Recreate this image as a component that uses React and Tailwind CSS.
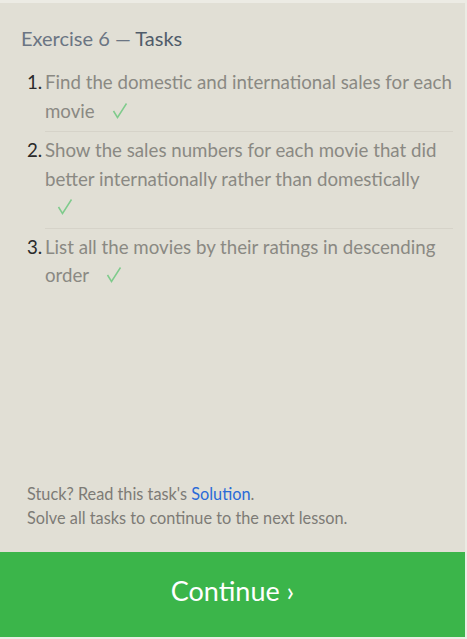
import React from "react";

const tasks = [
  "Find the domestic and international sales for each movie",
  "Show the sales numbers for each movie that did better internationally rather than domestically",
  "List all the movies by their ratings in descending order",
];

function Check() {
  return (
    <svg
      width="20"
      height="17"
      viewBox="0 0 20 17"
      className="inline-block ml-[12px] align-[-1px]"
    >
      <polyline
        points="1.5,9 5.5,15.5 14.5,1.5"
        fill="none"
        stroke="#7fcb8c"
        strokeWidth="1.5"
      />
    </svg>
  );
}

function App() {
  return (
    <div className="w-[467px] h-[639px] bg-[#ecebe4] pt-[3px] pr-[2px] pb-[2px] font-['Lato',sans-serif]">
      <div className="h-full flex flex-col bg-[#e1dfd5]">
        {/* HEADER */}
        <h1 className="px-[21px] pt-[23px] text-[20px] leading-[24px] text-[#6b7583]">
          Exercise 6 — <span className="text-[#505c6a]">Tasks</span>
        </h1>

        {/* TASKS */}
        <ol className="mt-[18px] pl-[27px] pr-[12px]">
          {tasks.map((task, i) => (
            <li key={i} className="flex">
              <span className="w-[18px] shrink-0 text-[18.7px] leading-[28.5px] text-[#2a2a2a]">
                {i + 1}.
              </span>
              <div
                className={
                  "flex-1 pb-[6px] mb-[4px] text-[18.7px] leading-[28.5px] text-[#8a8983] " +
                  (i < tasks.length - 1 ? "border-b border-[#d6d3c9]" : "")
                }
              >
                {task} <Check />
              </div>
            </li>
          ))}
        </ol>

        {/* FOOTER */}
        <div className="mt-auto px-[27px] pb-[22px] text-[16.3px] leading-[24px] text-[#7d7b76]">
          <p>
            Stuck? Read this task's{" "}
            <a href="#" className="text-[#2a6ad8]">
              Solution
            </a>
            .
          </p>
          <p>Solve all tasks to continue to the next lesson.</p>
        </div>
        <button className="h-[85px] w-full bg-[#3bb54a] pb-[6px] text-white text-[27px]">
          Continue ›
        </button>
      </div>
    </div>
  );
}

export default App;
